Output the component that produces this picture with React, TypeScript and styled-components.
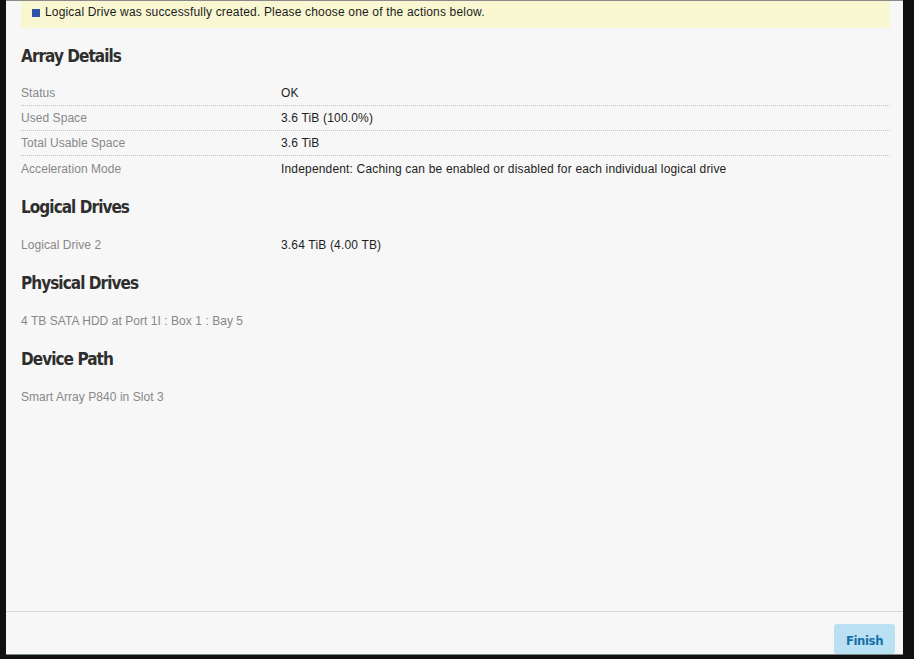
import React from "react";
import styled, { createGlobalStyle } from "styled-components";

const arrayDetails = [
  { label: "Status", value: "OK" },
  { label: "Used Space", value: "3.6 TiB (100.0%)" },
  { label: "Total Usable Space", value: "3.6 TiB" },
  {
    label: "Acceleration Mode",
    value: "Independent: Caching can be enabled or disabled for each individual logical drive",
  },
];

const GlobalStyle = createGlobalStyle`
  html, body {
    margin: 0;
    padding: 0;
    background: #101010;
    height: 100%;
  }
  body {
    font-family: "Liberation Sans", Arial, sans-serif;
    font-size: 12px;
    letter-spacing: 0.17px;
  }
`;

export default function App() {
  return (
    <>
      <GlobalStyle />
      <Frame>
        <Content>
          <Banner>
            <Bullet />
            Logical Drive was successfully created. Please choose one of the actions below.
          </Banner>

          <Heading $first>Array Details</Heading>
          <Table>
            {arrayDetails.map((row) => (
              <Row key={row.label}>
                <Label>{row.label}</Label>
                <Value>{row.value}</Value>
              </Row>
            ))}
          </Table>

          <Heading>Logical Drives</Heading>
          <Table>
            <Row>
              <Label>Logical Drive 2</Label>
              <Value>3.64 TiB (4.00 TB)</Value>
            </Row>
          </Table>

          <Heading>Physical Drives</Heading>
          <Table>
            <Row>
              <Label>4 TB SATA HDD at Port 1I : Box 1 : Bay 5</Label>
            </Row>
          </Table>

          <Heading>Device Path</Heading>
          <Table>
            <Row>
              <Label>Smart Array P840 in Slot 3</Label>
            </Row>
          </Table>
        </Content>
        <Footer>
          <FinishButton>Finish</FinishButton>
        </Footer>
      </Frame>
    </>
  );
}

const Frame = styled.div`
  display: flex;
  flex-direction: column;
  margin-left: 6px;
  width: 897px;
  height: 655px;
  background: #f7f7f7;
  border-top: 1px solid #8a8a8a;
  border-bottom: 1px solid #7d8a8a;
  box-sizing: border-box;
`;

const Content = styled.div`
  flex: 1;
  padding: 0 13px 0 15px;
`;

const Banner = styled.div`
  display: flex;
  align-items: center;
  height: 27px;
  box-sizing: border-box;
  padding: 3px 0 8px 11px;
  background: #f8f7d2;
  color: #1c1c1c;
  line-height: 16px;
`;

const Bullet = styled.span`
  width: 8px;
  height: 8px;
  margin-right: 5px;
  margin-top: 1px;
  background: #2c52aa;
`;

const Heading = styled.h2<{ $first?: boolean }>`
  margin: ${(p) => (p.$first ? "16px" : "14px")} 0 13px;
  font-family: "DejaVu Sans Condensed", "DejaVu Sans", sans-serif;
  font-stretch: condensed;
  font-weight: 700;
  font-size: 17px;
  line-height: 24px;
  color: #2e2e2e;
  letter-spacing: -0.95px;
`;

const Table = styled.div`
  display: flex;
  flex-direction: column;
`;

const Row = styled.div`
  display: grid;
  grid-template-columns: 260px 1fr;
  height: 25px;
  align-items: center;
  box-sizing: border-box;
  border-bottom: 1px dotted #c4c4c4;
  &:last-child {
    border-bottom: none;
  }
`;

const Label = styled.span`
  color: #888888;
  white-space: nowrap;
  letter-spacing: 0.05px;
`;

const Value = styled.span`
  color: #1e1e1e;
  white-space: nowrap;
`;

const Footer = styled.div`
  display: flex;
  justify-content: flex-end;
  align-items: flex-start;
  height: 43px;
  box-sizing: border-box;
  padding: 12px 8px 0 0;
  border-top: 1px solid #d8d8d8;
`;

const FinishButton = styled.button`
  width: 61px;
  height: 30px;
  border: none;
  border-radius: 3px;
  background: #bae1f3;
  color: #1670a8;
  font-family: "DejaVu Sans Condensed", "DejaVu Sans", sans-serif;
  font-stretch: condensed;
  font-weight: 700;
  font-size: 13px;
  letter-spacing: -0.4px;
  padding: 2px 0 0;
  cursor: pointer;
`;
